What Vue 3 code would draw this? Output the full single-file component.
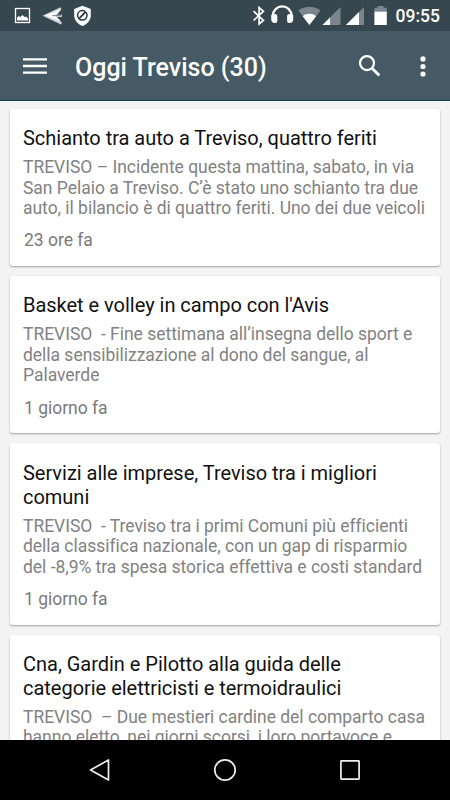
<template>
  <div class="screen">
    <header class="statusbar">
      <svg class="status-icons" width="450" height="31" viewBox="0 0 450 31">
        <!-- picture -->
        <rect x="15.5" y="8.5" width="14" height="14" fill="none" stroke="#fff" stroke-width="1.3" />
        <path d="M17 20.5v-2.8l1.8-1.7 1.7 1 2-2 2 2 1.5-.5 2 2v2z" fill="#fff" />
        <!-- paper plane -->
        <path d="M42.5 15.8L60.5 7.3l1 2-4.5 5.4h5v2.2h-5l5 6-1 1.5z" fill="#cfd5d7" />
        <path d="M45 15.6L60.5 9.5l-5.5 6.1 6 6z" fill="#fff" />
        <path d="M52 15.7h9" stroke="#37474f" stroke-width=".7" />
        <!-- shield -->
        <path d="M82.5 5.7l8.3 3.2v6.3c0 4.8-3.4 8.8-8.3 10.8-4.9-2-8.3-6-8.3-10.8V8.9z" fill="#fff" />
        <circle cx="82.3" cy="15.3" r="4.7" fill="none" stroke="#24353d" stroke-width="1.5" />
        <path d="M79.2 18.4l6.2-6.2" stroke="#24353d" stroke-width="1.8" />
        <!-- bluetooth -->
        <path d="M253.6 11.2l9.8 9.3-4.3 3.5V7.6l4.3 3.6-9.8 9.3" fill="none" stroke="#fff" stroke-width="1.7" />
        <!-- headphones -->
        <path d="M272.9 17v-1.3a9.3 9.3 0 0 1 18.6 0V17" fill="none" stroke="#fff" stroke-width="2.3" />
        <path d="M271.2 15.5q0-1.5 1.7-1.5h2.2q2.2 0 2.2 2v5q0 2-2.2 2c-2.7 0-3.9-1.6-3.9-4zM293.2 15.5q0-1.5-1.7-1.5h-2.2q-2.2 0-2.2 2v5q0 2 2.2 2c2.7 0 3.9-1.6 3.9-4z" fill="#fff" />
        <!-- wifi -->
        <path d="M309.4 25L298.4 10.6c6.5-5 15.5-5 22 0z" fill="#7b868c" />
        <path d="M309.4 25l-6.7-8.8c3.8-3.2 9.6-3.2 13.4 0z" fill="#fff" />
        <!-- mobile signals -->
        <path d="M322.5 25L340.5 7v18z" fill="#7b868c" />
        <path d="M322.5 25l7.5-7.5V25z" fill="#fff" />
        <path d="M346 25L364 7v18z" fill="#7b868c" />
        <path d="M346 25l13-13v13z" fill="#fff" />
        <!-- battery -->
        <path d="M374.4 12V7.8h3.2V6h6v1.8h3.2V12z" fill="#7b868c" />
        <path d="M374.4 11.7h12.4V25h-12.4z" fill="#fff" />
      </svg>
      <span class="clock">09:55</span>
    </header>

    <nav class="toolbar">
      <svg class="menu" width="24" height="18" viewBox="0 0 24 18">
        <path d="M0 2.4h24M0 9h24M0 15.6h24" stroke="#fff" stroke-width="2.3" />
      </svg>
      <h1>Oggi Treviso (30)</h1>
      <svg class="search" width="24" height="24" viewBox="0 0 24 24">
        <circle cx="9" cy="9.1" r="7" fill="none" stroke="#fff" stroke-width="2.2" />
        <path d="M14 14.2l7.4 7.4" stroke="#fff" stroke-width="2.8" />
      </svg>
      <svg class="more" width="6" height="22" viewBox="0 0 6 22">
        <circle cx="3" cy="3.9" r="2.6" fill="#fff" />
        <circle cx="3" cy="11.5" r="2.6" fill="#fff" />
        <circle cx="3" cy="19" r="2.6" fill="#fff" />
      </svg>
    </nav>

    <main class="feed">
      <article v-for="(item, i) in news" :key="i" class="card">
        <h2>
          <span v-for="line in item.title" :key="line" class="line">{{ line }}</span>
        </h2>
        <p>
          <span v-for="line in item.text" :key="line" class="line">{{ line }}</span>
        </p>
        <time>{{ item.time }}</time>
      </article>
    </main>

    <footer class="navbar">
      <svg width="22" height="24" viewBox="0 0 22 24">
        <path d="M1.5 12L19.5 2v20z" />
      </svg>
      <svg width="24" height="24" viewBox="0 0 24 24">
        <circle cx="12" cy="12" r="10.2" />
      </svg>
      <svg width="22" height="24" viewBox="0 0 22 24">
        <rect x="1.9" y="2.9" width="18.2" height="18.2" rx=".6" />
      </svg>
    </footer>
  </div>
</template>

<script setup>
const news = [
  {
    title: ['Schianto tra auto a Treviso, quattro feriti'],
    text: [
      'TREVISO – Incidente questa mattina, sabato, in via',
      'San Pelaio a Treviso. C’è stato uno schianto tra due',
      'auto, il bilancio è di quattro feriti. Uno dei due veicoli'
    ],
    time: '23 ore fa'
  },
  {
    title: ["Basket e volley in campo con l'Avis"],
    text: [
      'TREVISO  - Fine settimana all’insegna dello sport e',
      'della sensibilizzazione al dono del sangue, al',
      'Palaverde'
    ],
    time: '1 giorno fa'
  },
  {
    title: ['Servizi alle imprese, Treviso tra i migliori', 'comuni'],
    text: [
      'TREVISO  - Treviso tra i primi Comuni più efficienti',
      'della classifica nazionale, con un gap di risparmio',
      'del -8,9% tra spesa storica effettiva e costi standard'
    ],
    time: '1 giorno fa'
  },
  {
    title: ['Cna, Gardin e Pilotto alla guida delle', 'categorie elettricisti e termoidraulici'],
    text: [
      'TREVISO  – Due mestieri cardine del comparto casa',
      'hanno eletto, nei giorni scorsi, i loro portavoce e'
    ],
    time: '1 giorno fa'
  }
]
</script>

<style>
body {
  background: #000;
}
</style>

<style scoped>
.screen {
  width: 450px;
  height: 800px;
  display: flex;
  flex-direction: column;
  overflow: hidden;
  background: #f3f3f3;
  font-family: Roboto, sans-serif;
}

.statusbar {
  flex: none;
  height: 31px;
  display: grid;
  background: #37474f;
  color: #fff;
}

.status-icons,
.clock {
  grid-area: 1 / 1;
}

.clock {
  justify-self: end;
  padding-right: 10px;
  font-size: 17.5px;
  font-weight: 500;
  line-height: 33px;
}

.toolbar {
  flex: none;
  box-sizing: border-box;
  height: 70px;
  display: flex;
  align-items: center;
  padding: 0 24px 0 23px;
  border-bottom: 1px solid #083f57;
  background: #455a64;
  color: #fff;
}

h1 {
  flex: 1;
  margin: 5px 0 0 28px;
  font-size: 25px;
  font-weight: 500;
  line-height: 30px;
}

.search {
  margin-right: 38px;
}

.feed {
  flex: 1;
  min-height: 0;
  overflow: hidden;
  padding: 8px 10px 0;
}

.card {
  box-sizing: border-box;
  margin-bottom: 10px;
  padding: 17.2px 13px 15.3px;
  border-radius: 3px;
  background: #fff;
  box-shadow: 0 1px 2px rgba(0, 0, 0, 0.35);
}

.line {
  display: block;
  white-space: pre;
}

h2 {
  margin: 0 0 7px;
  color: #111;
  font-size: 20px;
  font-weight: 400;
  letter-spacing: -0.02px;
  line-height: 24px;
}

p {
  margin: 0 0 11.7px;
  color: #828282;
  font-size: 17.5px;
  letter-spacing: -0.025px;
  line-height: 20.5px;
}

time {
  display: block;
  margin-left: 1px;
  color: #7a7a7a;
  font-size: 17.5px;
  letter-spacing: -0.02px;
  line-height: 20.5px;
}

.navbar {
  flex: none;
  height: 60px;
  display: flex;
  align-items: center;
  justify-content: center;
  gap: 102px;
  background: #000;
}

.navbar svg {
  fill: none;
  stroke: #eee;
  stroke-width: 1.7;
  stroke-linejoin: round;
}
</style>
